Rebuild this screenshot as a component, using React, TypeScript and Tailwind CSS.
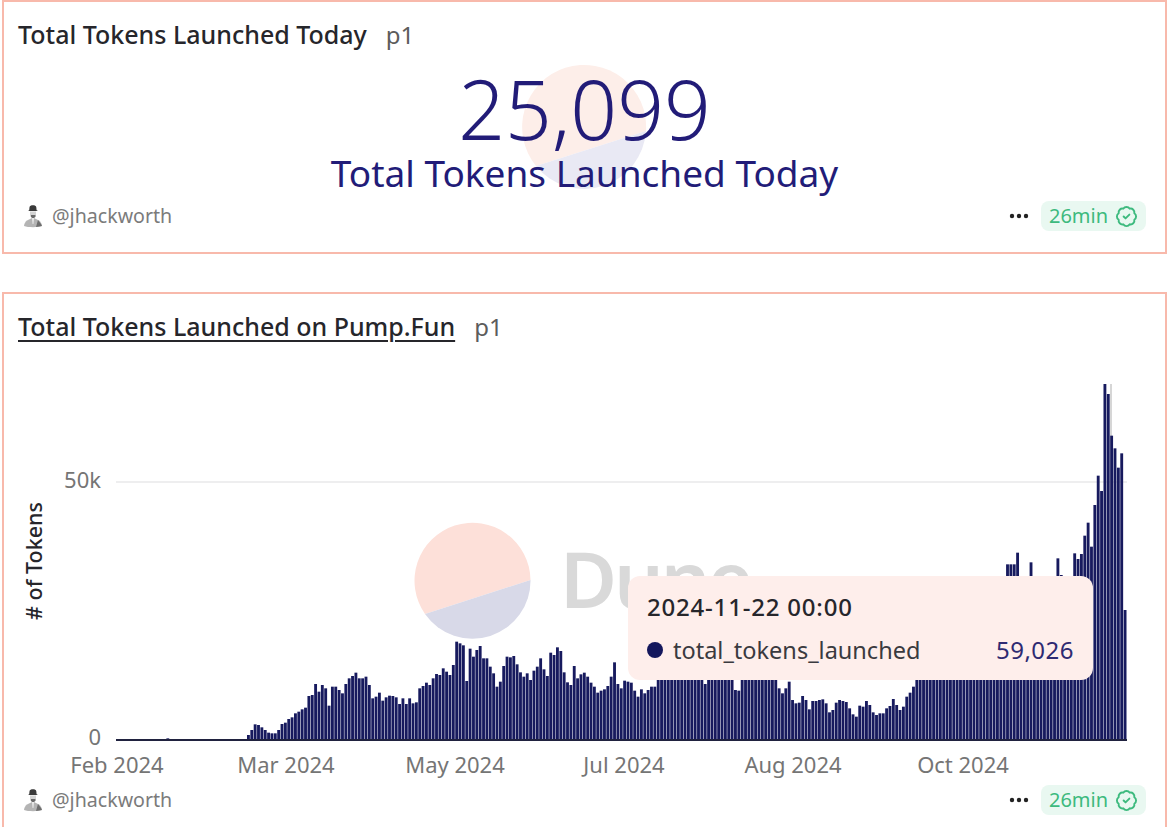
import { BadgeCheck } from "lucide-react";

// bar heights, read from the reference at 3x
const zeros = Array.from({ length: 38 }, (_, i) => (i === 15 ? 5 : 0));
const early = [
  3, 15, 30, 47, 45, 38, 30, 22, 20, 20, 30, 48, 52, 63, 68, 80, 85, 92, 97, 132, 135, 168, 145, 165, 155, 103, 160,
  160, 150, 140, 168, 185, 192, 202, 185, 185, 190, 165, 125, 130, 142, 118, 128, 133, 132, 128, 108, 125, 108, 125,
  110, 113, 155, 162, 172, 165, 185, 198, 195, 215, 205, 195, 225, 295, 290, 284, 177, 274, 250, 270, 282, 245, 245,
  220, 200, 160,
];
const middle = [
  175, 222, 250, 248, 252, 227, 203, 190, 200, 180, 208, 220, 245, 212, 192, 262, 255, 278, 267, 203, 173, 165, 222,
  185, 197, 202, 190, 172, 160, 142, 148, 152, 162, 190, 233, 168, 155, 178, 175, 172, 148, 130, 152, 140, 150, 160,
  160,
];
const hidden = [
  200, 205, 200, 210, 200, 205, 210, 200, 205, 200, 210, 205, 200, 205, 168, 200, 205, 210, 200, 205, 200, 210, 205,
  150, 148, 200, 205, 210, 200, 205, 200, 210, 205, 200, 205, 200,
];
const late = [
  155, 140, 155, 175, 120, 110, 112, 132, 120, 92, 117, 117, 120, 122, 110, 83, 90, 112, 120, 117, 114, 95, 77, 70,
  103, 100, 117, 105, 83, 75, 80, 80, 95, 102, 123, 105, 90, 100, 130, 142, 160,
];
const rising = Array.from({ length: 27 }, (_, i) => 190 + i * 11);
const end = [
  527, 527, 527, 562, 450, 450, 450, 533, 450, 450, 450, 450, 450, 450, 450, 545, 495, 470, 470, 470, 560, 543, 558,
  613, 652, 580, 705, 793, 747, 1068, 1038, 913, 875, 817, 860, 390,
];
const bars = [...zeros, ...early, ...middle, ...hidden, ...late, ...rising, ...end];
const pitch = 1011 / bars.length;

const xLabels = [
  { label: "Feb 2024", x: 117 },
  { label: "Mar 2024", x: 286 },
  { label: "May 2024", x: 455 },
  { label: "Jul 2024", x: 624 },
  { label: "Aug 2024", x: 793 },
  { label: "Oct 2024", x: 963 },
];

function Avatar() {
  return (
    <svg width="20" height="24" viewBox="0 0 20 24" className="shrink-0">
      <path d="M6.5 3.2 C6.8 .6 13 .6 13.3 3.2 L13.6 6.2 L15 7 L5 7 L6.2 6.2 Z" fill="#3a3a3a" />
      <path d="M7 7.5 H13 V11.5 C13 13 11 14 10 14 C8.8 14 7 13 7 11.5 Z" fill="#d4d4d4" />
      <path d="M8 11 H12.4 V13 L10 14.5 L8 13 Z" fill="#6a6a6a" />
      <path d="M9 14 L4 16.5 C2.4 17.5 1 20 1 22 C5 23.6 15 23.6 19 22 C19 20 17.6 17.5 16 16.5 L11 14 Z" fill="#b4b4b4" />
      <path d="M15 16 L18 20 L19 22 L13 23 Z" fill="#6e6e6e" />
      <path d="M9 14 H11 L10.4 20 H9.6 Z" fill="#ececec" />
    </svg>
  );
}

function CardFooter() {
  return (
    <div className="flex h-[36px] items-center justify-between pl-[19px] pr-[19px]">
      <div className="flex items-center gap-[9px] text-[19.6px] text-[#7b7b7b]">
        <Avatar />
        <span>@jhackworth</span>
      </div>
      <div className="flex items-center gap-[12px]">
        <svg width="20" height="6" viewBox="0 0 20 6">
          <circle cx="3" cy="3" r="2.2" fill="#222" />
          <circle cx="10" cy="3" r="2.2" fill="#222" />
          <circle cx="17" cy="3" r="2.2" fill="#222" />
        </svg>
        <div className="flex h-[30px] w-[105px] items-center justify-center gap-[7px] rounded-lg bg-[#e9f8f1] text-[20px] text-[#3dba7e]">
          <span>26min</span>
          <BadgeCheck size={23} strokeWidth={2} />
        </div>
      </div>
    </div>
  );
}

function CardTitle({ title, underline }: { title: string; underline?: boolean }) {
  return (
    <div className="flex items-center gap-[19px] pl-[14px] text-[#26262b]">
      <span className={underline ? "text-[25px] font-medium underline underline-offset-4" : "text-[25px] font-medium"}>
        {title}
      </span>
      <span className="text-[24px] text-[#5c5c5c]">p1</span>
    </div>
  );
}

function Pie({ top, bottom, topFill, bottomFill }: { top: string; bottom: string; topFill: string; bottomFill: string }) {
  return (
    <>
      <path d={top} fill={topFill} />
      <path d={bottom} fill={bottomFill} />
    </>
  );
}

export default function App() {
  return (
    <div className="h-[827px] w-[1170px] overflow-hidden bg-white pl-[2px] [font-family:'Noto_Sans',sans-serif]">
      {/* Counter card */}
      <section className="relative flex h-[254px] w-[1165px] flex-col border-2 border-[#f8b9ab]">
        <svg width="130" height="130" viewBox="520 63 130 130" className="absolute left-[516px] top-[61px]">
          <Pie
            top="M536 166 A62 62 0 1 1 646 131 Z"
            bottom="M536 166 A62 62 0 0 0 646 131 Z"
            topFill="#fdeee9"
            bottomFill="#e9e9f4"
          />
        </svg>
        <div className="flex h-[66px] items-center">
          <CardTitle title="Total Tokens Launched Today" />
        </div>
        <div className="relative flex h-[130px] flex-col items-center text-[#221c78]">
          <span className="h-[84px] text-[82px] font-light leading-[80px]">25,099</span>
          <span className="text-[37px] leading-[50px]">Total Tokens Launched Today</span>
        </div>
        <div className="relative">
          <CardFooter />
        </div>
      </section>

      {/* Chart card */}
      <section className="mt-[38px] flex h-[560px] w-[1165px] flex-col border-2 border-[#f8b9ab]">
        <div className="flex h-[66px] items-center">
          <CardTitle title="Total Tokens Launched on Pump.Fun" underline />
        </div>
        <div className="relative h-[422px]">
          <svg width="1161" height="422" viewBox="4 360 1161 422" className="block">
            <Pie
              top="M425 614 A58 58 0 1 1 530.5 580 Z"
              bottom="M425 614 A58 58 0 0 0 530.5 580 Z"
              topFill="#fde0d9"
              bottomFill="#d8d9e8"
            />
            <text x="560" y="608" letterSpacing="-3" className="fill-[#d9d9d9] text-[78px] font-semibold">
              Dune
            </text>
            <line x1="116" y1="482" x2="1127" y2="482" stroke="#e8e8ea" strokeWidth="1.5" />
            <rect x="1110" y="384" width="2" height="356" fill="#d6d6d6" />
            <text x="101" y="488" textAnchor="end" className="fill-[#757575] text-[22px]">
              50k
            </text>
            <text x="101" y="745" textAnchor="end" className="fill-[#757575] text-[22px]">
              0
            </text>
            <text
              x="33"
              y="561"
              textAnchor="middle"
              transform="rotate(-90 33 561)"
              dominantBaseline="central"
              className="fill-[#26262b] text-[21.5px] font-medium"
            >
              # of Tokens
            </text>
            {bars.map((h, i) => {
              const height = Math.min(h / 3, 356);
              return (
                <rect key={i} x={116 + i * pitch} y={740 - height} width={pitch - 0.5} height={height} fill="#171a5e" />
              );
            })}
            <rect x="116" y="739" width="1011" height="2" fill="#20223f" />
            {xLabels.map((t) => (
              <text key={t.label} x={t.x} y="773" textAnchor="middle" className="fill-[#757575] text-[22px]">
                {t.label}
              </text>
            ))}
          </svg>
          {/* Tooltip */}
          <div className="absolute left-[624px] top-[216px] flex h-[104px] w-[465px] flex-col gap-[13px] rounded-xl bg-[#feeeeb] px-[19px] pt-[16px]">
            <div className="text-[24px] font-medium leading-[30px] tracking-[0.8px] text-[#26262b]">2024-11-22 00:00</div>
            <div className="flex items-center">
              <span className="mr-[10px] h-[16px] w-[16px] rounded-full bg-[#14175c]" />
              <span className="text-[23.5px] leading-[30px] text-[#3a3a3f]">total_tokens_launched</span>
              <span className="ml-auto text-[24px] leading-[30px] tracking-[0.5px] text-[#2e2a72]">59,026</span>
            </div>
          </div>
        </div>
        <CardFooter />
      </section>
    </div>
  );
}
